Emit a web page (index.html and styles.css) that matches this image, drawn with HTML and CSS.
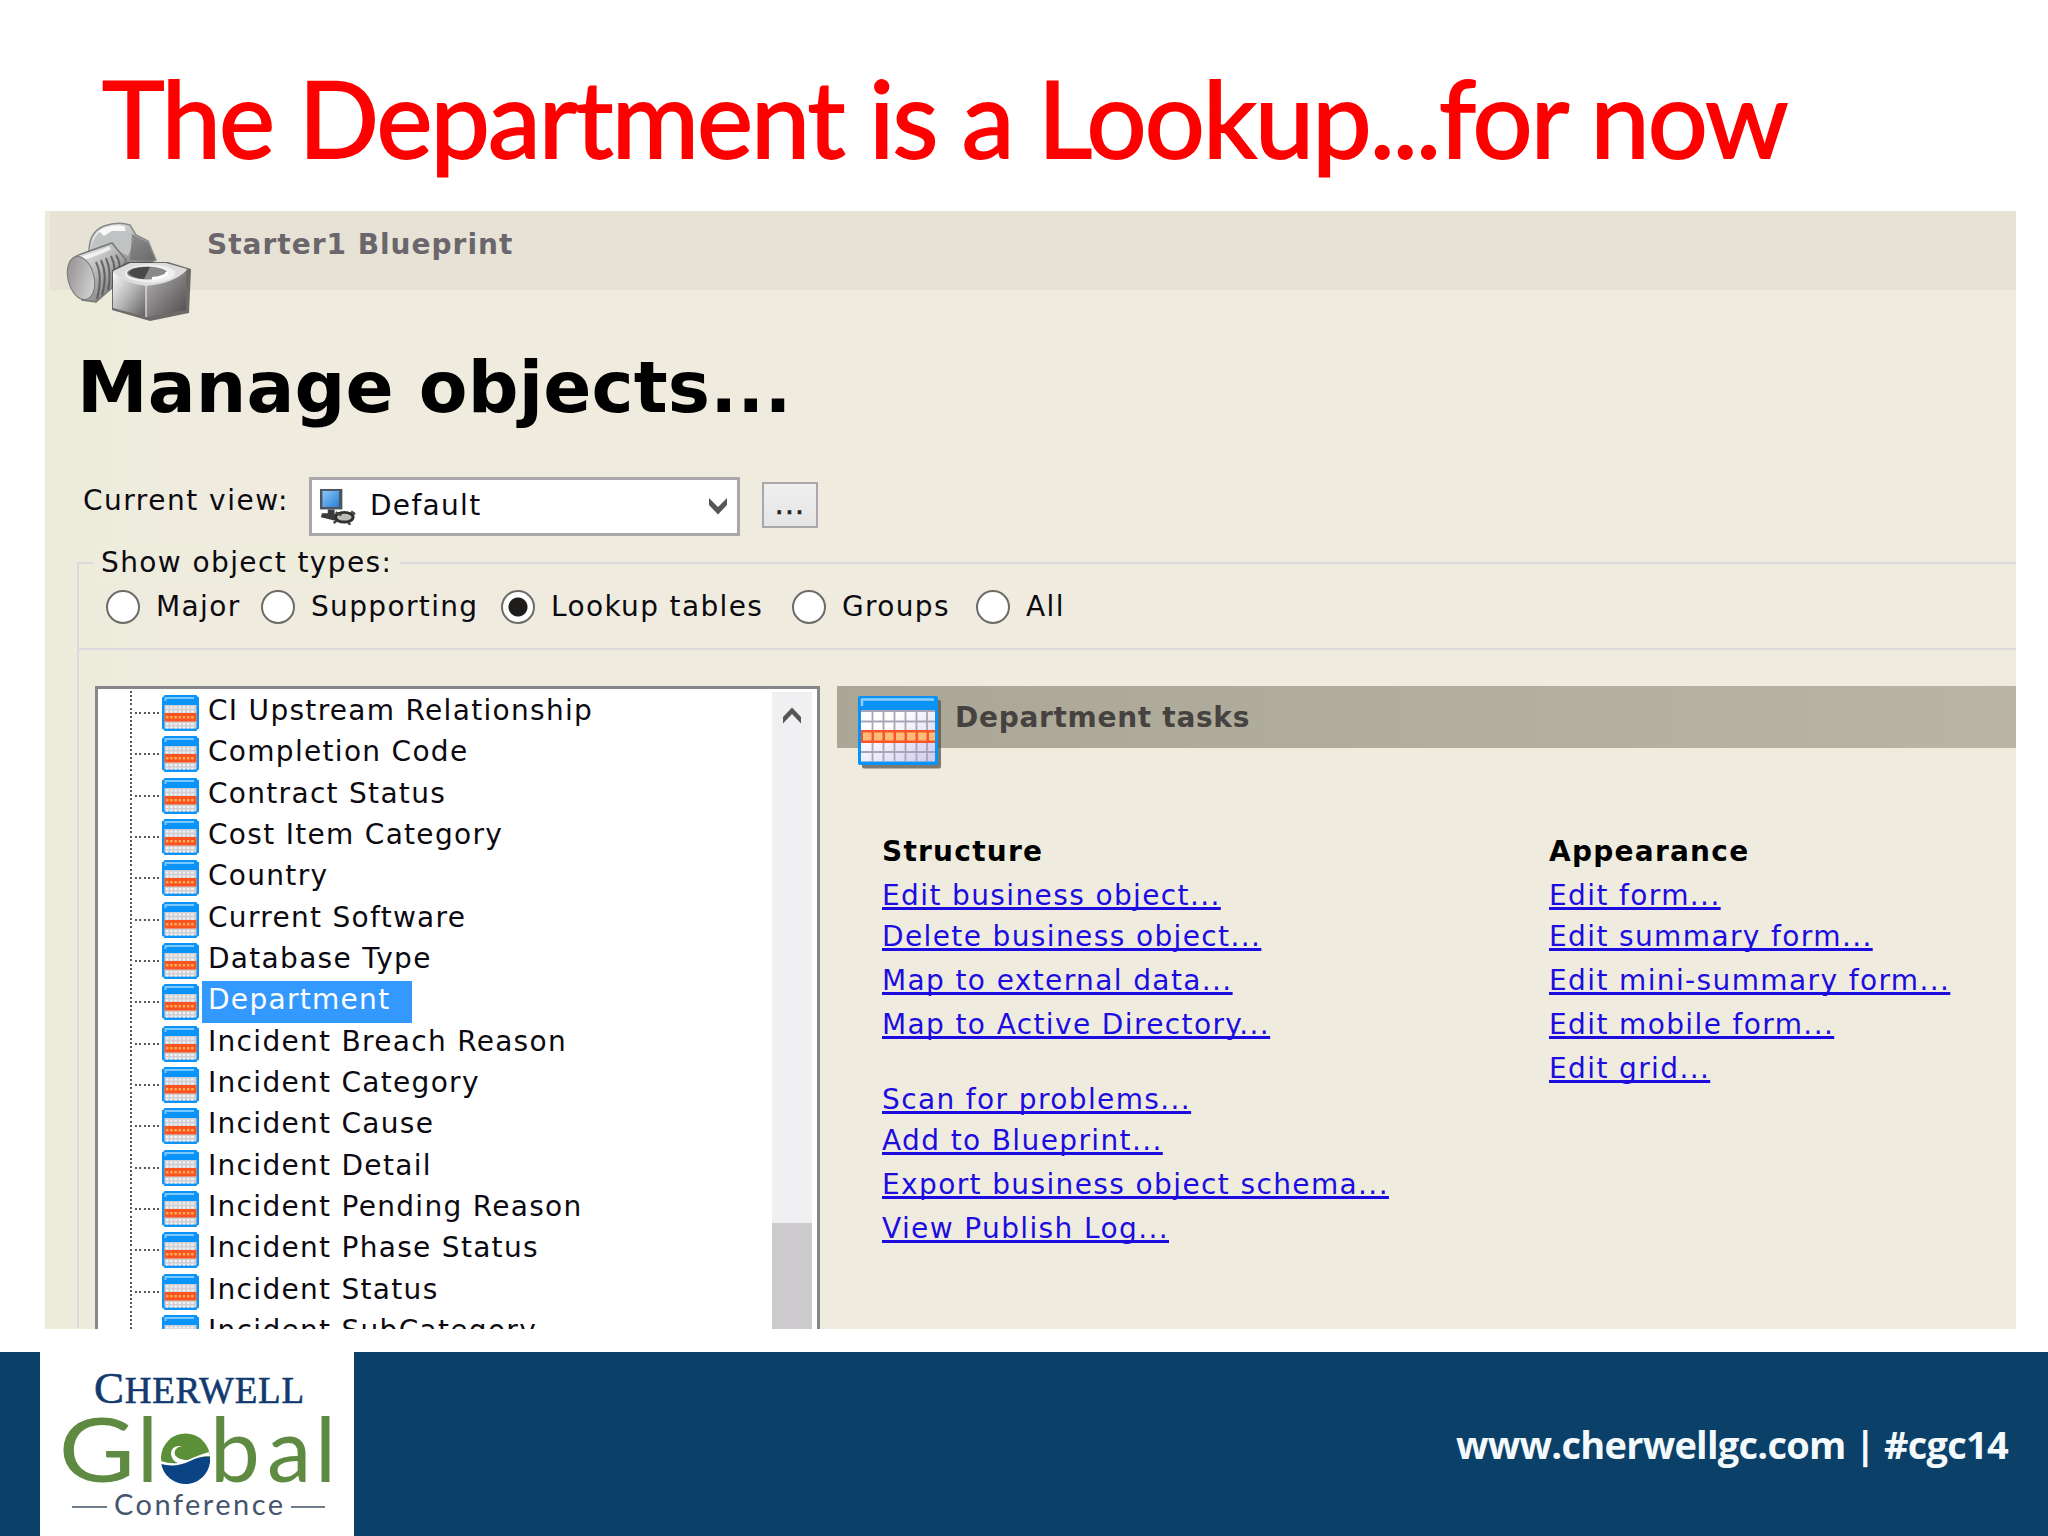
FILE: index.html
```
<!DOCTYPE html>
<html lang="en">
<head>
<meta charset="utf-8">
<title>The Department is a Lookup...for now</title>
<link rel="stylesheet" href="styles.css">
</head>
<body>
<svg width="0" height="0" class="defs" aria-hidden="true">
  <defs>
    <linearGradient id="steel" x1="0" y1="0" x2="1" y2="1"><stop offset="0" stop-color="#fafafa"/><stop offset=".5" stop-color="#b5b5b5"/><stop offset="1" stop-color="#5c5c5c"/></linearGradient>
    <linearGradient id="steelFace" x1="0" y1="0" x2="1" y2="1"><stop offset="0" stop-color="#8b8989"/><stop offset="1" stop-color="#dddcdc"/></linearGradient>
    <linearGradient id="steelDark" x1="0" y1="0" x2="1" y2="1"><stop offset="0" stop-color="#b4b2b2"/><stop offset="1" stop-color="#4e4c4c"/></linearGradient>
    <linearGradient id="cells" x1="0" y1="0" x2="1" y2="1"><stop offset=".3" stop-color="#ffffff"/><stop offset="1" stop-color="#cfc9ee"/></linearGradient>
    <linearGradient id="screen" x1="0" y1="0" x2="1" y2="1"><stop offset="0" stop-color="#8cc8fa"/><stop offset="1" stop-color="#2a7fd6"/></linearGradient>
    <symbol id="table" viewBox="0 0 37 36">
      <rect x="0" y="1.5" width="37" height="33" rx="1.5" fill="#0a93f8"/><rect x="2" y="0" width="33" height="36" rx="1" fill="#0a93f8"/>
      <path d="M3.5 6V3H32" stroke="#7cc8ff" stroke-width="2" fill="none"/>
      <rect x="2.5" y="10" width="32" height="23.5" fill="#d0cfd4"/>
      <path d="M4 12.5H33M4 16.5H33M4 29H33M4 32.5H33" stroke="#f4f4f6" stroke-width="2" stroke-dasharray="2.4 1.8"/>
      <rect x="2.5" y="18" width="32" height="8.500" fill="#fb5320"/>
      <path d="M4 22.3H33" stroke="#ffb055" stroke-width="2.4" stroke-dasharray="2.4 1.8"/>
    </symbol>
  </defs>
</svg>
<div class="slide">
  <h1 class="title">The Department is a Lookup...for now</h1>

  <main class="app">
    <header class="blueprint">
      <svg class="bolts" viewBox="0 0 126 100">
        <path d="M23 30Q23 10 38 4 52 -1 64 3L70 13 82 19 90 38 70 48 26 40Z" fill="url(#steel)" stroke="#888" stroke-width="1.5"/>
        <path d="M25 26Q28 11 42 6L60 6 68 18 62 34 44 24 26 32Z" fill="#bfc3c3"/>
        <path d="M33 9Q44 2 58 4L60 9 46 9 38 14Z" fill="#f7f7f7"/>
        <path d="M66 12L82 21 89 38 64 38Z" fill="#686868" opacity=".6"/>
        <path d="M4 40Q8 34 18 31L46 21 60 38 48 64 30 80 16 78Z" fill="url(#steel)" stroke="#777" stroke-width="1.5"/>
        <path d="M30 40Q37 54 31 77M35 38Q42 53 36 73M40 36Q46 50 42 68M45 34Q51 46 47 62M50 33Q56 42 52 53" stroke="#4c4c4c" stroke-width="2" fill="none" opacity=".75"/>
        <path d="M10 38Q26 34 44 26" stroke="#fff" stroke-width="4" fill="none" opacity=".7"/>
        <ellipse cx="15" cy="56" rx="13" ry="22" transform="rotate(-14 15 56)" fill="url(#steelFace)" stroke="#777"/>
        <path d="M46 48L62 40 102 40 125 47 123 91 84 99 46 88Z" fill="#4b4b4b" opacity=".8"/>
        <path d="M47 49L64 41 100 41 121 47 116 58 80 65 50 60Z" fill="#dcdcdc"/>
        <path d="M47 50Q60 62 80 64V95L47 86Z" fill="url(#steel)"/>
        <path d="M80 64Q106 62 120 49V88L80 95Z" fill="url(#steelDark)"/>
        <path d="M80 64V95" stroke="#e4e4e4" stroke-width="1.3"/>
        <ellipse cx="84" cy="51.500" rx="25" ry="9" fill="#efefef"/>
        <ellipse cx="81" cy="51" rx="20" ry="6.500" fill="#8a8989"/>
        <path d="M62 51Q66 44 84 45L78 57Q66 56 62 51Z" fill="#4a4949"/>
        <path d="M86 56.500Q101 55 101 50" stroke="#fff" stroke-width="3" fill="none"/>
      </svg>
      <span class="blueprint-name">Starter1 Blueprint</span>
    </header>

    <h2 class="heading">Manage objects...</h2>

    <div class="view-row">
      <span class="view-label">Current view:</span>
      <div class="select">
        <svg class="view-icon" viewBox="0 0 38 38">
          <path d="M9 22H16V27L25 31 22 35 2 30 3 26 9 26Z" fill="#3a3b3d"/>
          <rect x="1" y="1" width="23" height="21" fill="#4a5560"/><rect x="3.5" y="3" width="17" height="16.5" fill="url(#screen)"/>
          <ellipse cx="26" cy="30" rx="9" ry="5" fill="#bdbdb8" stroke="#2f2f2f" stroke-width="3"/>
          <path d="M17 25L23 28M33 24L37 27M18 34L15 36M30 35L32 38" stroke="#444" stroke-width="2.5"/>
        </svg>
        <span class="select-value">Default</span>
        <svg class="chevron" viewBox="0 0 20 17"><path d="M1 0L10 9 19 0V7L10 16.500 1 7Z" fill="#565656"/></svg>
      </div>
      <button class="more" type="button">...</button>
    </div>

    <section class="group">
      <div class="legend">Show object types:</div>
      <div class="radios">
        <label class="radio w1"><i class="dot"></i>Major</label>
        <label class="radio w2"><i class="dot"></i>Supporting</label>
        <label class="radio w3"><i class="dot on"></i>Lookup tables</label>
        <label class="radio w4"><i class="dot"></i>Groups</label>
        <label class="radio"><i class="dot"></i>All</label>
      </div>

      <div class="body">
        <div class="tree">
          <ul class="rows">
            <li class="row"><svg class="ico"><use href="#table"/></svg><span class="name">CI Upstream Relationship</span></li>
            <li class="row"><svg class="ico"><use href="#table"/></svg><span class="name">Completion Code</span></li>
            <li class="row"><svg class="ico"><use href="#table"/></svg><span class="name">Contract Status</span></li>
            <li class="row"><svg class="ico"><use href="#table"/></svg><span class="name">Cost Item Category</span></li>
            <li class="row"><svg class="ico"><use href="#table"/></svg><span class="name">Country</span></li>
            <li class="row"><svg class="ico"><use href="#table"/></svg><span class="name">Current Software</span></li>
            <li class="row"><svg class="ico"><use href="#table"/></svg><span class="name">Database Type</span></li>
            <li class="row"><svg class="ico"><use href="#table"/></svg><span class="name selected">Department</span></li>
            <li class="row"><svg class="ico"><use href="#table"/></svg><span class="name">Incident Breach Reason</span></li>
            <li class="row"><svg class="ico"><use href="#table"/></svg><span class="name">Incident Category</span></li>
            <li class="row"><svg class="ico"><use href="#table"/></svg><span class="name">Incident Cause</span></li>
            <li class="row"><svg class="ico"><use href="#table"/></svg><span class="name">Incident Detail</span></li>
            <li class="row"><svg class="ico"><use href="#table"/></svg><span class="name">Incident Pending Reason</span></li>
            <li class="row"><svg class="ico"><use href="#table"/></svg><span class="name">Incident Phase Status</span></li>
            <li class="row"><svg class="ico"><use href="#table"/></svg><span class="name">Incident Status</span></li>
            <li class="row"><svg class="ico"><use href="#table"/></svg><span class="name">Incident SubCategory</span></li>
          </ul>
          <div class="scrollbar">
            <svg class="up" viewBox="0 0 20 17"><path d="M1 16.500L10 7 19 16.500V10L10 .5 1 10Z" fill="#565656"/></svg>
            <div class="thumb"></div>
          </div>
        </div>

        <div class="tasks">
          <header class="task-bar">
            <svg class="task-icon" viewBox="0 0 84 74">
              <rect x="4" y="4" width="79" height="68.500" rx="2" fill="#55534c" opacity=".75"/>
              <rect x="0" y="0" width="80" height="69" rx="2" fill="#0a93f5"/>
              <path d="M4 10V3.500H76" stroke="#8fd0ff" stroke-width="2.5" fill="none"/>
              <rect x="3" y="14.500" width="74" height="51" fill="url(#cells)"/>
              <path d="M3 15H77M3 25.500H77M3 56H77" stroke="#a8a5b8" stroke-width="2"/>
              <path d="M14.500 15V65.500M25.500 15V65.500M36.500 15V65.500M47.500 15V65.500M58.500 15V65.500M69 15V65.500" stroke="#a8a5b8" stroke-width="1.800"/>
              <rect x="3" y="34" width="74" height="13" fill="#fb5427"/>
              <path d="M5 40.500H77" stroke="#ffbb7a" stroke-width="8" stroke-dasharray="8.500 2.500"/>
            </svg>
            <span class="task-title">Department tasks</span>
          </header>
          <div class="columns">
            <nav class="links">
              <h3 class="links-head">Structure</h3>
              <a class="link gap" href="#">Edit business object...</a>
              <a class="link" href="#">Delete business object...</a>
              <a class="link gap" href="#">Map to external data...</a>
              <a class="link gap" href="#">Map to Active Directory...</a>
              <a class="link break" href="#">Scan for problems...</a>
              <a class="link" href="#">Add to Blueprint...</a>
              <a class="link gap" href="#">Export business object schema...</a>
              <a class="link gap" href="#">View Publish Log...</a>
            </nav>
            <nav class="links">
              <h3 class="links-head">Appearance</h3>
              <a class="link gap" href="#">Edit form...</a>
              <a class="link" href="#">Edit summary form...</a>
              <a class="link gap" href="#">Edit mini-summary form...</a>
              <a class="link gap" href="#">Edit mobile form...</a>
              <a class="link gap" href="#">Edit grid...</a>
            </nav>
          </div>
        </div>
      </div>
    </section>
  </main>

  <footer class="footer">
    <svg class="logo" viewBox="40 1352 314 184">
      <rect x="40" y="1352" width="314" height="184" fill="#fff"/>
      <text class="logo-top" x="94" y="1403" textLength="210"><tspan font-size="45">C</tspan><tspan font-size="37">HERWELL</tspan></text>
      <g class="logo-mid">
        <text transform="translate(58.500 1481.500) scale(1.18 1)">G</text><text x="137" y="1481.500">l</text>
        <text x="210" y="1481.500">b</text><text x="267" y="1481.500">a</text><text x="315" y="1481.500">l</text>
      </g>
      <circle cx="185.500" cy="1458" r="24.500" fill="#5b9039"/>
      <path d="M161 1462Q176 1467 190 1460 201 1456 210 1457A24.500 24.500 0 0 1 161 1462Z" fill="#0a4484"/>
      <path d="M161 1464Q176 1468 190 1461 200 1456 210 1456L209 1452Q196 1456 188 1460 178 1460 175 1455 173 1448 182 1446 171 1445 171 1454 172 1461 178 1463 170 1464 161 1461Z" fill="#fff"/>
      <text class="logo-low" x="114" y="1515" textLength="169">Conference</text>
      <path d="M72 1507H107M291 1507H325" stroke="#6f7c8c" stroke-width="1.800"/>
    </svg>
    <span class="url">www.cherwellgc.com | #cgc14</span>
  </footer>
</div>
</body>
</html>
```
FILE: styles.css
```
* { box-sizing: border-box; }
body {
  margin: 0;
  background: #fff;
  font-family: "DejaVu Sans", Verdana, sans-serif;
  font-size: 28px;
  letter-spacing: 1.3px;
  color: #0c0a10;
}
h1, h2, h3, ul { margin: 0; padding: 0; }
.defs { display: block; }
.slide {
  width: 2048px;
  height: 1536px;
  overflow: hidden;
  display: flex;
  flex-direction: column;
}
.title {
  height: 211px;
  padding-left: 102px;
  font: 400 106px/234px Lato, Carlito, sans-serif;
  letter-spacing: -1.88px;
  color: #fe0000;
  white-space: nowrap;
  -webkit-text-stroke: 1.8px #fe0000;
}
.app {
  width: 1971px;
  height: 1118px;
  margin-left: 45px;
  overflow: hidden;
  background: linear-gradient(90deg, #ebecda 0, #efecdf 130px);
}

/* Blueprint strip */
.blueprint {
  height: 79px;
  margin-left: 5px;
  display: flex;
  background: #e6e2d5;
}
.bolts { width: 126px; height: 100px; margin: 11px 15px 0 16px; flex: none; }
.blueprint-name {
  font-weight: 700;
  line-height: 67px;
  letter-spacing: 1px;
  color: #6b666b;
}
.heading {
  height: 187px;
  padding-left: 32px;
  font-size: 71px;
  line-height: 195px;
  letter-spacing: .15px;
  color: #000;
}

/* Current view */
.view-row { display: flex; height: 59px; padding-left: 38px; }
.view-label { width: 226px; line-height: 47px; letter-spacing: 1.5px; }
.select {
  width: 431px;
  display: flex;
  align-items: center;
  padding: 0 9px 0 7px;
  background: #fff;
  border: 3px solid #a9a7aa;
}
.view-icon { width: 37px; height: 37px; margin-right: 14px; }
.select-value { flex: 1; line-height: 53px; padding-bottom: 2px; }
.chevron { width: 20px; height: 17px; }
.more {
  width: 56px;
  height: 46px;
  margin: 5px 0 0 22px;
  padding: 0 0 1px;
  border: 2px solid #a9a7aa;
  background: linear-gradient(#f0eff0, #e5e5e6);
  font: inherit;
  letter-spacing: 1.3px;
  color: #222;
  -webkit-text-stroke: .6px #222;
}

/* Object types */
.group {
  height: 766px;
  margin: 26px 0 0 32px;
  border-top: 2px solid #dcdadc;
  border-left: 2px solid #dcdadc;
}
.legend {
  width: 306px;
  height: 37px;
  margin: -20px 0 0 15px;
  padding-left: 7px;
  line-height: 37px;
  letter-spacing: 1.4px;
  background: #eeecdd;
}
.radios {
  height: 69px;
  display: flex;
  padding: 0 0 15px 27px;
  border-bottom: 2px solid #dcdadc;
}
.radio { display: flex; align-items: center; letter-spacing: 1.35px; line-height: 52px; }
.w1 { width: 155px; }
.w2 { width: 240px; }
.w3 { width: 291px; }
.w4 { width: 184px; }
.dot {
  width: 34px;
  height: 34px;
  margin-right: 16px;
  border: 2px solid #6d6b68;
  border-radius: 50%;
  background: #fff;
}
.dot.on { background: radial-gradient(circle, #1f1d1c 0 9px, #fff 10px); }

.body { display: flex; padding: 36px 0 0 16px; }

/* Tree */
.tree {
  width: 725px;
  height: 660px;
  display: flex;
  flex: none;
  overflow: hidden;
  border: 3px solid #85858a;
  background: #fff;
}
.rows {
  flex: 1;
  padding-top: 3px;
  list-style: none;
  background: repeating-linear-gradient(#5a5856 0 2px, transparent 2px 4.13px) 32px 2px / 2px 100% no-repeat;
}
.row {
  height: 41.33px;
  display: flex;
  padding-left: 38px;
  background: repeating-linear-gradient(90deg, #5a5856 0 2px, transparent 2px 4.5px) 37px 20px / 25px 2px no-repeat;
}
.ico { width: 37px; height: 36px; margin: 3px 3px 0 26px; flex: none; }
.name { padding-left: 6px; line-height: 38px; white-space: nowrap; }
.selected { padding-right: 22px; background: #3399ff; color: #fff; }
.scrollbar {
  width: 40px;
  margin: 3px 5px 0 0;
  display: flex;
  flex-direction: column;
  align-items: center;
  background: #f0eff1;
}
.up { width: 20px; height: 17px; margin-top: 15px; flex: none; }
.thumb { width: 40px; height: 140px; margin-top: 499px; background: #cdcbce; flex: none; }

/* Tasks */
.tasks { flex: 1; margin-left: 17px; }
.task-bar {
  height: 62px;
  display: flex;
  background: linear-gradient(90deg, #aba797, #b8b5a5);
}
.task-icon { width: 84px; height: 74px; margin: 10px 13px 0 21px; flex: none; }
.task-title {
  font-weight: 700;
  line-height: 63px;
  letter-spacing: .7px;
  color: #46423f;
}
.columns { display: flex; padding: 83px 0 0 45px; }
.links { width: 667px; display: flex; flex-direction: column; align-items: flex-start; flex: none; }
.links:last-child { width: 467px; }
.links-head { font-size: 28px; line-height: 41px; letter-spacing: 1.25px; color: #000; }
.link {
  line-height: 41px;
  letter-spacing: 1.38px;
  color: #1c0ce0;
  text-decoration: underline 3px;
  text-underline-offset: 2px;
  text-decoration-skip-ink: none;
}
.gap { margin-top: 3px; }
.break { margin-top: 34px; }

/* Footer */
.footer {
  height: 184px;
  margin-top: 23px;
  padding: 0 40px;
  display: flex;
  justify-content: space-between;
  background: #0b4168;
}
.logo { width: 314px; height: 184px; }
.logo-top { font-family: "Liberation Serif", serif; fill: #123a70; letter-spacing: 0; stroke: #123a70; stroke-width: .6px; }
.logo-mid { font: 400 89px Lato, sans-serif; letter-spacing: 0; fill: #5f8a42; }
.logo-low { font: 400 29px Lato, sans-serif; letter-spacing: 0; fill: #44566e; }
.url {
  font: 700 38px/184px "Open Sans", "Noto Sans", sans-serif;
  letter-spacing: -.75px;
  color: #f4f9fc;
}
```
